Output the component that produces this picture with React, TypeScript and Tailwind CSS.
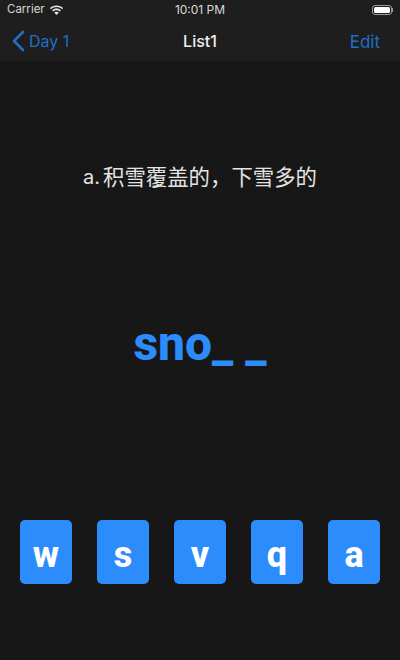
import React from "react";

const letters = ["w", "s", "v", "q", "a"];

const App: React.FC = () => {
  return (
    <div className="w-[400px] h-[660px] bg-[#171717] flex flex-col overflow-hidden font-['Inter','Noto_Sans_CJK_SC',sans-serif] text-white">
      {/* Status + nav bar */}
      <div className="bg-[#1e1e1e] h-[61px] shrink-0 flex flex-col">
        <div className="h-[20px] flex items-center justify-between pl-[7px] pr-[7px] relative text-[12px] text-[#d8d8d8]">
          <div className="flex items-center gap-[4px]">
            <span className="text-[11.5px]">Carrier</span>
            <svg width="15" height="11" viewBox="0 0 16 12" fill="#e8e8e8">
              <path d="M8 2.2c2.4 0 4.5.9 6.1 2.4l1.1-1.2C13.3 1.6 10.8.5 8 .5S2.7 1.6.8 3.4l1.1 1.2C3.500 3.100 5.600 2.200 8 2.200z" />
              <path d="M8 5.600c1.400 0 2.700.5 3.700 1.400l1.100-1.200C11.500 4.600 9.800 3.900 8 3.900s-3.500.7-4.800 1.900L4.300 7c1-.9 2.300-1.400 3.700-1.400z" />
              <path d="M8 7.300c-1 0-1.800.4-2.500 1L8 11l2.500-2.700c-.7-.6-1.500-1-2.500-1z" />
            </svg>
          </div>
          <span className="absolute left-0 right-0 text-center">10:01 PM</span>
          <div className="flex items-center">
            <div className="w-[20px] h-[10px] rounded-[3px] border border-[#9a9a9a] p-[1px]">
              <div className="w-full h-full rounded-[1.5px] bg-white" />
            </div>
            <div className="w-[1px] h-[4px] bg-[#9a9a9a]" />
          </div>
        </div>
        <div className="flex-1 flex items-center justify-between relative pl-[12px] pr-[20px] pt-[1px]">
          <div className="flex items-center gap-[4px] text-[#1f6fc4] text-[16px]">
            <svg width="13" height="22" viewBox="0 0 13 22" fill="none" stroke="#1f6fc4" strokeWidth="2.6" strokeLinecap="round" strokeLinejoin="round">
              <path d="M11 2 2 11l9 9" />
            </svg>
            <span>Day 1</span>
          </div>
          <span className="absolute left-0 right-0 text-center text-[16px] font-medium text-[#f0f0f0]">List1</span>
          <span className="text-[#1f6fc4] text-[17px] leading-[24px] pt-[2px]">Edit</span>
        </div>
      </div>

      {/* Card content */}
      <div className="flex-1 flex flex-col items-center">
        <p className="mt-[102px] h-[28px] leading-[28px] text-[21.4px] text-[#e4e4e4] flex items-center">
          <span className="text-[20px] mr-[3px]">a.</span>
          <span>积雪覆盖的，下雪多的</span>
        </p>
        <p className="mt-[124px] h-[58px] leading-[58px] text-[48px] font-extrabold text-[#2c8cfb] whitespace-pre font-['Roboto',sans-serif]">sno_ _</p>
        <div className="mt-[147px] w-full flex justify-between px-[20px]">
          {letters.map((l) => (
            <button
              key={l}
              className="w-[52px] h-[64px] rounded-[5px] bg-[#2c8cfb] text-white text-[36px] font-extrabold flex items-center justify-center pt-[6px] font-['Roboto',sans-serif]"
            >
              {l}
            </button>
          ))}
        </div>
      </div>
    </div>
  );
};

export default App;
